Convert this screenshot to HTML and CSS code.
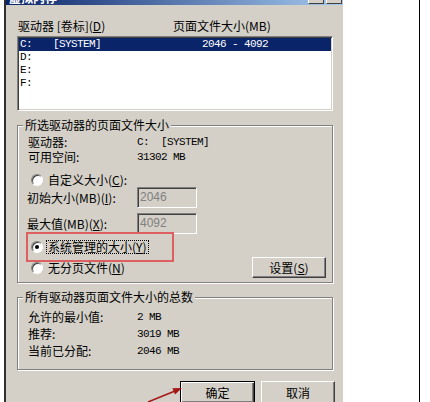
FILE: index.html
```html
<!DOCTYPE html>
<html>
<head>
  <meta charset="utf-8">
  <title>虚拟内存</title>
  <link rel="stylesheet" href="styles.css">
</head>
<body>

  <div class="window">
    <div class="titlebar">
      <span class="title">虚拟内存</span>
      <span class="caption-btns"><i></i><i></i></span>
    </div>

    <div class="dialog">
      <div class="list-head">
        <span class="col1">驱动器 [卷标](<u>D</u>)</span>
        <span>页面文件大小(MB)</span>
      </div>

      <div class="listbox">
        <div class="drive selected">
          <span class="letter">C:</span><span class="vol">[SYSTEM]</span><span>2046 - 4092</span>
        </div>
        <div class="drive"><span class="letter">D:</span></div>
        <div class="drive"><span class="letter">E:</span></div>
        <div class="drive"><span class="letter">F:</span></div>
      </div>

      <div class="group">
        <div class="group-title">所选驱动器的页面文件大小</div>
        <div class="info">
          <div class="info-row"><span class="key">驱动器:</span><span class="mono">C:  [SYSTEM]</span></div>
          <div class="info-row"><span class="key">可用空间:</span><span class="mono">31302 MB</span></div>
        </div>

        <div class="radio-row first">
          <span class="radio"></span>
          <span>自定义大小(<u>C</u>):</span>
        </div>
        <div class="field-row">
          <span class="field-label">初始大小(MB)(<u>I</u>):</span>
          <span class="textbox">2046</span>
        </div>
        <div class="field-row second">
          <span class="field-label">最大值(MB)(<u>X</u>):</span>
          <span class="textbox">4092</span>
        </div>

        <div class="radio-row picked">
          <span class="radio on"></span>
          <span class="focus">系统管理的大小(<u>Y</u>)</span>
          <span class="mark"></span>
        </div>

        <div class="last-row">
          <div class="radio-row">
            <span class="radio"></span>
            <span>无分页文件(<u>N</u>)</span>
          </div>
          <button class="btn small">设置(<u>S</u>)</button>
        </div>
      </div>

      <div class="group totals">
        <div class="group-title">所有驱动器页面文件大小的总数</div>
        <div class="info">
          <div class="info-row"><span class="key">允许的最小值:</span><span class="mono">2 MB</span></div>
          <div class="info-row"><span class="key">推荐:</span><span class="mono">3019 MB</span></div>
          <div class="info-row"><span class="key">当前已分配:</span><span class="mono">2046 MB</span></div>
        </div>
      </div>

      <div class="actions">
        <button class="btn default">确定</button>
        <button class="btn">取消</button>
      </div>
    </div>

    <!-- annotation arrow pointing at OK -->
    <svg class="arrow" width="44" height="22" viewBox="0 0 44 22">
      <line x1="4" y1="22" x2="31" y2="11" stroke="#a51616" stroke-width="1.5"/>
      <polygon points="38,8 31,14.6 28.4,8.2" fill="#a51616"/>
    </svg>
  </div>

  <div class="page-edge"></div>

</body>
</html>
```

FILE: styles.css
```css
* { box-sizing: border-box; margin: 0; padding: 0; }

body {
  font-family: "Noto Sans CJK SC", sans-serif;
  font-size: 12px;
  line-height: 14px;
  color: #000;
  background: #fff;
  display: flex;
  height: 100vh;
  overflow: hidden;
}

.window {
  position: relative;
  width: 339px;
  margin-left: 4px;
  border-left: 2px solid #303030;
  background: #d4d0c8;
}

.titlebar {
  height: 5px;
  overflow: hidden;
  display: flex;
  justify-content: space-between;
  padding: 0 1px 0 3px;
  background: linear-gradient(90deg, #0a246a, #a6caf0);
}

.title {
  margin-top: -9px;
  color: #fff;
  font-weight: bold;
}

.caption-btns {
  display: flex;
  gap: 2px;
  margin-top: -10px;
}

.caption-btns i {
  width: 16px;
  height: 14px;
  background: #d4d0c8;
  border: 1px solid;
  border-color: #fff #404040 #404040 #fff;
}

.dialog {
  padding: 14px 10px 0 11px;
}

.list-head {
  display: flex;
  padding-left: 1px;
}

.list-head .col1 {
  width: 155px;
}

.listbox {
  margin-top: 3px;
  height: 75px;
  padding: 1px;
  background: #fff;
  border: 1px solid;
  border-color: #808080 #fff #fff #808080;
  box-shadow: inset 1px 1px #404040, inset -1px -1px #d4d0c8;
}

.drive, .mono {
  font-family: "Liberation Mono", monospace;
  font-size: 11px;
  letter-spacing: -0.6px;
  white-space: pre;
}

.drive {
  display: flex;
  height: 13px;
  line-height: 13px;
  padding-left: 1px;
}

.drive.selected {
  background: #0a246a;
  color: #fff;
}

.drive .letter { width: 33px; }
.drive .vol { width: 149px; }

.group {
  margin-top: 14px;
  padding: 0 6px 4px 10px;
  border: 1px solid #808080;
  box-shadow: 1px 1px 0 #fff, inset 1px 1px 0 #fff;
}

.group-title {
  width: fit-content;
  margin: -8px 0 0 -5px;
  padding: 0 2px;
  background: #d4d0c8;
}

.info {
  display: grid;
  row-gap: 1px;
  margin-top: 3px;
}

.info-row {
  display: flex;
  line-height: 14px;
}

.key {
  width: 109px;
}

.radio-row {
  display: flex;
  align-items: center;
  height: 14px;
  position: relative;
}

.radio-row.first { margin-top: 9px; }
.radio-row.picked { margin-top: 6px; }

.radio {
  position: relative;
  flex: none;
  width: 12px;
  height: 12px;
  margin: 0 5px 0 3px;
  border-radius: 50%;
  background: #fff;
  border: 1px solid;
  border-color: #808080 #fff #fff #808080;
  box-shadow: inset 1px 1px #404040;
}

.radio.on::after {
  content: "";
  position: absolute;
  left: 3px;
  top: 3px;
  width: 4px;
  height: 4px;
  border-radius: 50%;
  background: #000;
}

.focus {
  margin-left: -2px;
  padding: 0 1px;
  line-height: 12px;
  border: 1px dotted #000;
}

/* red annotation box drawn over the option */
.mark {
  position: absolute;
  left: -2px;
  top: -8px;
  width: 148px;
  height: 30px;
  border: 2px solid #de5f5f;
}

.field-row {
  display: flex;
  align-items: center;
}

.field-row.second { margin-top: 5px; }

.field-label {
  width: 110px;
  margin-left: -1px;
}

.textbox {
  width: 60px;
  height: 21px;
  padding: 2px 0 0 2px;
  font-family: "Liberation Sans", sans-serif;
  color: #808080;
  background: #d4d0c8;
  border: 1px solid;
  border-color: #808080 #fff #fff #808080;
  box-shadow: inset 1px 1px #404040, inset -1px -1px #d4d0c8;
}

.last-row {
  display: flex;
  justify-content: space-between;
  align-items: center;
  margin-top: 3px;
}

.btn {
  display: flex;
  align-items: center;
  justify-content: center;
  width: 75px;
  height: 23px;
  font: inherit;
  color: #000;
  background: #d4d0c8;
  border: 1px solid;
  border-color: #fff #404040 #404040 #fff;
  box-shadow: inset -1px -1px #808080;
}

.btn.small {
  width: 74px;
  height: 21px;
}

.btn.default {
  border: 1px solid #000;
  box-shadow: inset 1px 1px #fff, inset -1px -1px #404040, inset -2px -2px #808080;
}

.totals {
  padding-bottom: 11px;
}

.totals .info {
  row-gap: 3px;
  margin-top: 6px;
}

.actions {
  display: flex;
  justify-content: flex-end;
  gap: 6px;
  margin: 11px -2px 0 0;
}

.actions .btn:last-child {
  width: 74px;
}

.arrow {
  position: absolute;
  left: 138px;
  top: 380px;
}

.page-edge {
  width: 1px;
  margin-left: 76px;
  background: #000;
}
```
